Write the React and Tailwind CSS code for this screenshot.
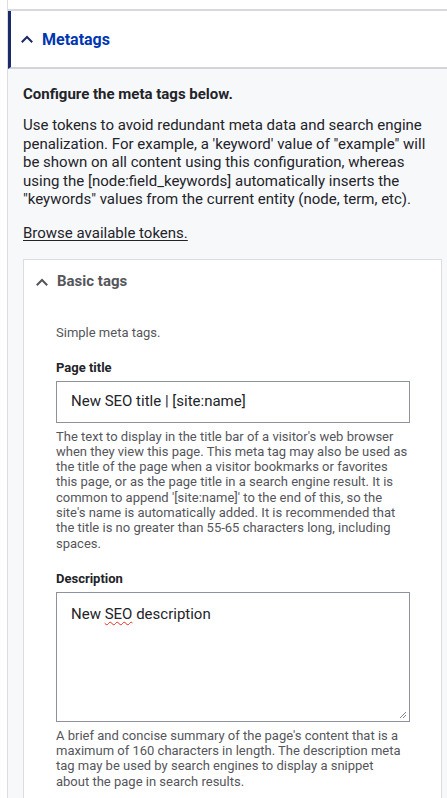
import React from 'react';

const Chevron = ({ className }) => (
  <svg viewBox="0 0 12 8" className={className} fill="none" stroke="currentColor" strokeWidth="2" strokeLinecap="square">
    <path d="M1.5 6.5 L6 2 L10.5 6.5" />
  </svg>
);

export default function App() {
  return (
    <div className="min-h-screen bg-white pl-[7px] font-['Roboto',sans-serif] text-[#222330]">
      <div className="min-h-screen border-l border-[#dcdde2] bg-[#f7f8fa]">
        {/* top strip */}
        <div className="h-[11px] border-b-2 border-[#d8d9de] bg-white" />

        {/* Metatags header */}
        <div className="flex h-[58px] items-center border-b-2 border-l-[3px] border-b-[#d3d4d9] border-l-[#1b2a6b] bg-white pl-[10px]">
          <Chevron className="h-[8px] w-[12px] text-[#1c2a66]" />
          <span className="ml-[9px] mt-[2px] text-[16px] font-bold text-[#0036b1]">Metatags</span>
        </div>

        {/* panel */}
        <div className="pl-[15px] pt-[14px]">
          <p className="text-[15px] font-bold leading-[22px] text-[#232429]">Configure the meta tags below.</p>
          <p className="mt-[11px] pr-[14px] text-[15px] leading-[18.5px] text-[#232429]">
            Use tokens to avoid redundant meta data and search engine penalization. For example, a 'keyword' value of "example" will be shown on all content using this configuration, whereas using the [node:field_keywords] automatically inserts the "keywords" values from the current entity (node, term, etc).
          </p>
          <a href="#" className="mt-[14px] inline-block text-[15px] leading-[20px] text-[#232429] underline underline-offset-2">
            Browse available tokens.
          </a>

          {/* Basic tags card */}
          <div className="mt-[14px] mr-[5px] border border-[#dcdde3] bg-white pb-[20px]">
            <div className="flex h-[44px] items-center pl-[12px]">
              <Chevron className="h-[8px] w-[12px] text-[#55565b]" />
              <span className="ml-[9px] text-[15px] font-bold text-[#55565b]">Basic tags</span>
            </div>
            <div className="pl-[32px] pr-[31px]">
              <p className="mt-[21px] text-[13px] leading-[16px] text-[#55565b]">Simple meta tags.</p>

              <label className="mt-[19px] block text-[13px] font-bold leading-[16px] text-[#232429]">Page title</label>
              <div className="mt-[5px] flex h-[42px] items-center border border-[#8e929c] bg-white pl-[14px] text-[15px] text-[#232429]">
                New SEO title | [site:name]
              </div>
              <p className="mt-[6px] text-[13px] leading-[15.3px] text-[#55565b]">
                The text to display in the title bar of a visitor's web browser when they view this page. This meta tag may also be used as the title of the page when a visitor bookmarks or favorites this page, or as the page title in a search engine result. It is common to append '[site:name]' to the end of this, so the site's name is automatically added. It is recommended that the title is no greater than 55-65 characters long, including spaces.
              </p>

              <label className="mt-[20px] block text-[13px] font-bold leading-[16px] text-[#232429]">Description</label>
              <div className="relative mt-[5px] h-[130px] border border-[#8e929c] bg-white pl-[14px] pt-[11px] text-[15px] leading-[20px] text-[#232429]">
                New <span className="underline decoration-wavy decoration-[#e0301e] decoration-1 underline-offset-2">SEO</span> description
                <svg className="absolute bottom-[2px] right-[2px] h-[8px] w-[8px]" viewBox="0 0 8 8" stroke="#777" strokeWidth="0.9">
                  <path d="M1 7 L7 1 M4 7 L7 4" />
                </svg>
              </div>
              <p className="mt-[6px] mr-[8px] text-[13px] leading-[15.3px] text-[#55565b]">
                A brief and concise summary of the page's content that is a maximum of 160 characters in length. The description meta tag may be used by search engines to display a snippet about the page in search results.
              </p>
            </div>
          </div>
        </div>
      </div>
    </div>
  );
}
